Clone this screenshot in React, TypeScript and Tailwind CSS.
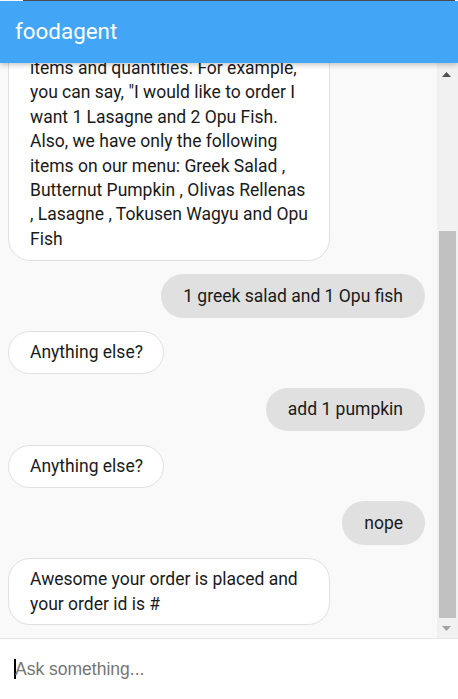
import { useLayoutEffect, useRef } from "react";

type Msg = { from: "bot" | "user"; text: React.ReactNode };

const messages: Msg[] = [
  { from: "bot", text: "Hi! I'm foodagent. You can say New Order or Track Order." },
  { from: "user", text: "new order" },
  {
    from: "bot",
    text: (
      <>
        Ok, starting a new order. Please specify food
        <br />
        items and quantities. For example, you can say, "I would like to order I want 1 Lasagne and 2 Opu Fish. Also, we have only the following items on our menu: Greek Salad , Butternut Pumpkin , Olivas Rellenas , Lasagne , Tokusen Wagyu and Opu Fish
      </>
    ),
  },
  { from: "user", text: "1 greek salad and 1 Opu fish" },
  { from: "bot", text: "Anything else?" },
  { from: "user", text: "add 1 pumpkin" },
  { from: "bot", text: "Anything else?" },
  { from: "user", text: "nope" },
  { from: "bot", text: "Awesome your order is placed and your order id is #" },
];

export default function App() {
  const ref = useRef<HTMLDivElement>(null);
  useLayoutEffect(() => {
    if (ref.current) ref.current.scrollTop = ref.current.scrollHeight;
  }, []);

  return (
    <div className="h-[699px] w-full flex flex-col bg-white font-[Roboto,sans-serif] overflow-hidden">
      <div className="h-px shrink-0 ml-[23px] mr-[3px] bg-[#4b5058]" />
      <header className="relative z-10 h-[62px] shrink-0 bg-[#42a5f5] flex items-center px-[15px] shadow-[0_2px_5px_rgba(0,0,0,0.22)]">
        <span className="text-white text-[22.4px] leading-none -mt-[1px]">foodagent</span>
      </header>
      <div className="flex-1 min-h-0 flex">
        <div ref={ref} className="flex-1 min-w-0 overflow-hidden bg-[#f9f9f9]">
          <div className="flex flex-col gap-[13.5px] pl-[8px] pr-[12px] pt-[13px] pb-[13px]">
            {messages.map((m, i) =>
              m.from === "bot" ? (
                <div
                  key={i}
                  className="self-start max-w-[322px] bg-white border border-[#e0e0e0] rounded-[22px] pl-[21px] pr-[20px] py-[8.3px] text-[17.5px] leading-[24.4px] text-[#1a1a1a]"
                >
                  {m.text}
                </div>
              ) : (
                <div
                  key={i}
                  className="self-end bg-[#e0e0e0] rounded-[22px] px-[22px] py-[9.75px] text-[17.5px] leading-[24px] text-[#1a1a1a]"
                >
                  {m.text}
                </div>
              )
            )}
          </div>
        </div>
        {/* scrollbar */}
        <div className="w-[21px] shrink-0 bg-[#f1f1f1] flex flex-col">
          <div className="h-[20px] shrink-0 flex items-center justify-center pr-[2px] pt-[3px]">
            <svg width="9" height="5" viewBox="0 0 9 5">
              <path d="M4.5 0 L9 5 L0 5 Z" fill="#505050" />
            </svg>
          </div>
          <div className="flex-1 flex flex-col justify-end">
            <div className="h-[387px] ml-[2px] w-[17px] bg-[#c1c1c1]" />
          </div>
          <div className="h-[20px] shrink-0 flex items-center justify-center pr-[2px]">
            <svg width="9" height="5" viewBox="0 0 9 5">
              <path d="M0 0 L9 0 L4.5 5 Z" fill="#a3a3a3" />
            </svg>
          </div>
        </div>
      </div>
      <div className="h-[61px] shrink-0 border-t border-[#e6e6e6] bg-white flex items-center pl-[14px]">
        <span className="w-[2px] h-[20px] bg-black -mr-px" />
        <span className="font-['Liberation_Sans',Arial,sans-serif] text-[17.5px] text-[#757575] mt-[1px]">
          Ask something...
        </span>
      </div>
    </div>
  );
}
